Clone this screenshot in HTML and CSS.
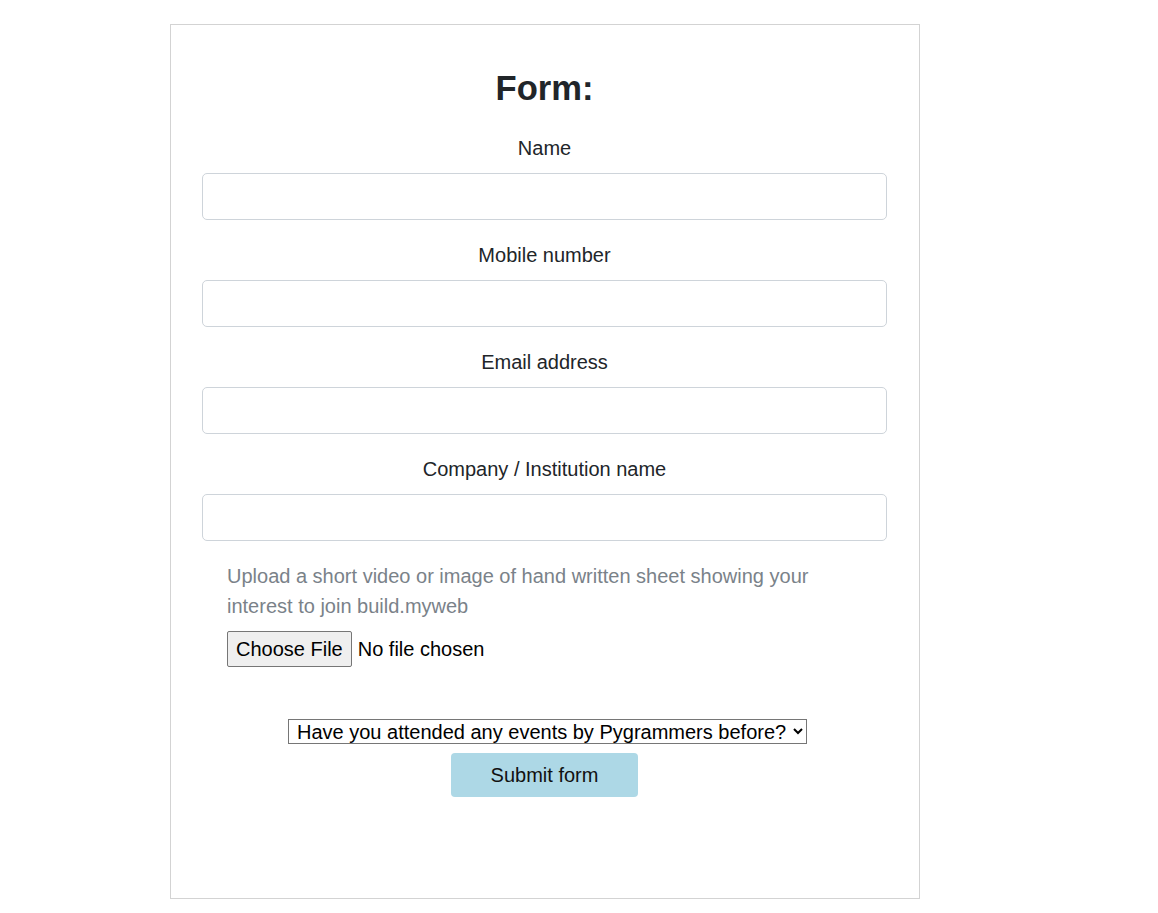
FILE: index.html
```html
<!DOCTYPE html>
<html lang="en">
<head>
<meta charset="utf-8">
<title>Form</title>
<link rel="stylesheet" href="styles.css">
</head>
<body>
<div class="card">
  <h1 class="title">Form:</h1>
  <form class="form">
    <label class="label first" for="name">Name</label>
    <input class="field" id="name" type="text">
    <label class="label" for="mobile">Mobile number</label>
    <input class="field" id="mobile" type="text">
    <label class="label" for="email">Email address</label>
    <input class="field" id="email" type="email">
    <label class="label" for="company">Company / Institution name</label>
    <input class="field" id="company" type="text">
    <div class="upload">
      <p class="upload-text">Upload a short video or image of hand written sheet showing your interest to join build.myweb</p>
      <input class="file" type="file">
    </div>
    <div class="select-row">
      <select class="select">
        <option>Have you attended any events by Pygrammers before?</option>
        <option>Yes</option>
        <option>No</option>
      </select>
    </div>
    <div class="submit-row">
      <button class="submit" type="button">Submit form</button>
    </div>
  </form>
</div>
</body>
</html>
```
FILE: styles.css
```css
html, body {
  margin: 0;
  padding: 0;
  background: #fff;
}
body {
  font-family: "Liberation Sans", Arial, sans-serif;
  color: #212529;
  padding-top: 24px;
}
.card {
  box-sizing: border-box;
  width: 750px;
  height: 875px;
  margin-left: 170px;
  border: 1px solid #d3d3d3;
  padding: 0 32px 0 31px;
}
.title {
  margin: 43px 0 0;
  font-size: 34.6px;
  line-height: 40px;
  font-weight: 700;
  text-align: center;
  color: #212529;
}
.form {
  display: flex;
  flex-direction: column;
}
.label {
  display: block;
  text-align: center;
  font-size: 20px;
  line-height: 26px;
  margin-top: 22px;
  margin-bottom: 12px;
  color: #212529;
}
.label.first {
  margin-top: 27px;
}
.field {
  box-sizing: border-box;
  width: 685px;
  height: 47px;
  border: 1px solid #ced4da;
  border-radius: 5px;
  margin: 0;
  padding: 6px 12px;
  font-size: 18px;
  font-family: inherit;
}
.upload {
  padding-left: 25px;
  margin-top: 20px;
}
.upload-text {
  margin: 0;
  font-size: 20px;
  line-height: 30px;
  color: #7a8289;
  max-width: 600px;
}
.file {
  display: block;
  box-sizing: border-box;
  height: 36px;
  margin-top: 10px;
  font-family: "Liberation Sans", Arial, sans-serif;
  font-size: 20px;
  color: #000;
}
.file::file-selector-button {
  height: 36px;
  padding: 0 8px;
  margin-right: 6px;
  font-family: "Liberation Sans", Arial, sans-serif;
  font-size: 20px;
  color: #000;
  background: #efefef;
  border: 1px solid #767676;
  border-radius: 2px;
}
.select-row {
  display: flex;
  justify-content: center;
  margin-top: 52px;
  padding-left: 6px;
}
.select {
  font-family: "Liberation Sans", Arial, sans-serif;
  font-size: 20px;
  height: 25px;
  border: 1px solid #767676;
  border-radius: 0;
  background: #fff;
  color: #000;
  padding: 0 2px 0 4px;
  width: 519px;
}
.submit-row {
  display: flex;
  justify-content: center;
  margin-top: 9px;
}
.submit {
  width: 187px;
  height: 44px;
  border: none;
  border-radius: 4px;
  background: #add8e6;
  color: #111;
  font-family: "Liberation Sans", Arial, sans-serif;
  font-size: 20px;
}
```
